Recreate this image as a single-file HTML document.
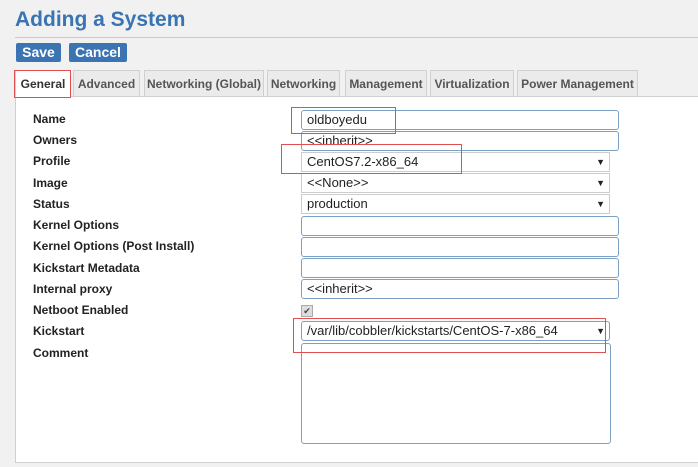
<!DOCTYPE html>
<html><head><style>
body{margin:0;width:698px;height:467px;background:#f1f1f1;font-family:"Liberation Sans",Arial,sans-serif;position:relative;overflow:hidden}
.a{position:absolute}
h1{position:absolute;left:15px;top:8px;margin:0;font-size:21px;color:#3a74b3;font-weight:bold}
.hr{left:15px;top:37px;width:683px;height:1px;background:#c8c8c8}
.btn{top:43px;height:19px;background:#3a74b3;color:#fff;font-weight:bold;font-size:14px;line-height:19px;text-align:center;border-radius:2px}
.tab{top:70px;height:26px;background:#ebebeb;border:1px solid #d0d0d0;border-bottom:none;font-size:12px;font-weight:bold;color:#555;line-height:27px;text-align:center;box-sizing:border-box}
.panel{left:15px;top:96px;width:690px;height:367px;background:#fff;border:1px solid #d0d0d0;box-sizing:border-box}
.lbl{left:33px;font-size:12px;font-weight:bold;color:#222}
.in{left:301px;width:318px;height:20px;border:1px solid #7aa0c4;border-radius:3px;box-sizing:border-box;background:#fff;font-size:13px;padding-left:5px;line-height:18px;color:#222}
.sel{left:301px;width:309px;height:20px;border:1px solid #ccc;box-sizing:border-box;background:#fff;font-size:13px;padding-left:5px;line-height:18px;color:#222}
.sel:after{content:"▼";position:absolute;right:4px;top:0;font-size:9px}
.red{border:1px solid #e05050;box-sizing:border-box}
</style></head><body>
<h1>Adding a System</h1>
<div class="a hr"></div>
<div class="a btn" style="left:16px;width:45px">Save</div>
<div class="a btn" style="left:69px;width:58px">Cancel</div>
<div class="a panel"></div>
<div class="a tab" style="left:15px;width:56px;background:#fff;height:27px;color:#333">General</div>
<div class="a tab" style="left:73px;width:67px">Advanced</div>
<div class="a tab" style="left:144px;width:120px">Networking (Global)</div>
<div class="a tab" style="left:267px;width:73px">Networking</div>
<div class="a tab" style="left:345px;width:82px">Management</div>
<div class="a tab" style="left:430px;width:84px">Virtualization</div>
<div class="a tab" style="left:517px;width:121px">Power Management</div>
<div class="a lbl" style="top:112px">Name</div>
<div class="a lbl" style="top:133px">Owners</div>
<div class="a lbl" style="top:154px">Profile</div>
<div class="a lbl" style="top:176px">Image</div>
<div class="a lbl" style="top:197px">Status</div>
<div class="a lbl" style="top:218px">Kernel Options</div>
<div class="a lbl" style="top:239px">Kernel Options (Post Install)</div>
<div class="a lbl" style="top:261px">Kickstart Metadata</div>
<div class="a lbl" style="top:282px">Internal proxy</div>
<div class="a lbl" style="top:303px">Netboot Enabled</div>
<div class="a lbl" style="top:324px">Kickstart</div>
<div class="a lbl" style="top:346px">Comment</div>
<div class="a in" style="top:110px">oldboyedu</div>
<div class="a in" style="top:131px">&lt;&lt;inherit&gt;&gt;</div>
<div class="a sel" style="top:152px">CentOS7.2-x86_64</div>
<div class="a sel" style="top:173px">&lt;&lt;None&gt;&gt;</div>
<div class="a sel" style="top:194px">production</div>
<div class="a in" style="top:216px"></div>
<div class="a in" style="top:237px"></div>
<div class="a in" style="top:258px"></div>
<div class="a in" style="top:279px">&lt;&lt;inherit&gt;&gt;</div>
<div class="a" style="left:301px;top:305px;width:10px;height:10px;border:1px solid #aaa;background:#ddd;font-size:9px;line-height:10px;text-align:center;color:#444">✔</div>
<div class="a in" style="top:321px;width:309px">/var/lib/cobbler/kickstarts/CentOS-7-x86_64<span style="position:absolute;right:4px;font-size:9px">▼</span></div>
<div class="a in" style="top:343px;width:310px;height:101px"></div>
<div class="a red" style="left:14px;top:70px;width:57px;height:28px"></div>
<div class="a red" style="left:291px;top:107px;width:105px;height:27px"></div>
<div class="a red" style="left:281px;top:144px;width:181px;height:30px"></div>
<div class="a red" style="left:293px;top:318px;width:313px;height:35px"></div>
</body></html>
